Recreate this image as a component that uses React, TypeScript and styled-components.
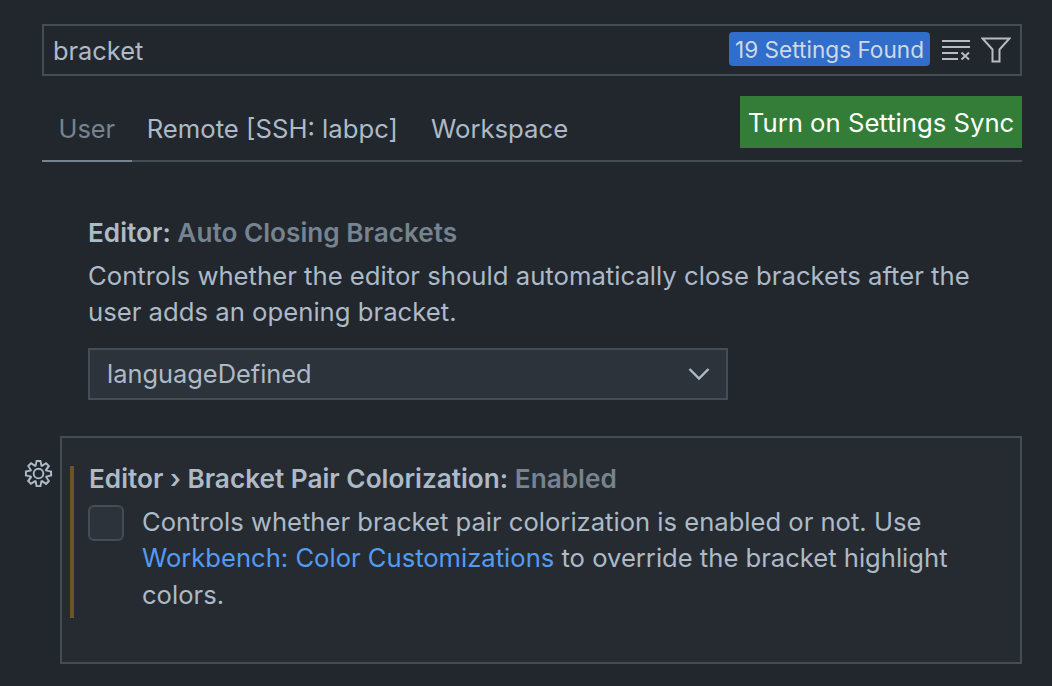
import React from "react";
import styled, { createGlobalStyle } from "styled-components";

const Global = createGlobalStyle`
  html, body { margin: 0; padding: 0; background: #22272e; }
  body { width: 1052px; height: 686px; overflow: hidden; font-family: Inter, "Liberation Sans", sans-serif; }
  * { box-sizing: border-box; }
`;

const Page = styled.div`
  width: 1052px;
  height: 686px;
  padding: 24px 30px 0 42px;
  display: flex;
  flex-direction: column;
  background: #22272e;
  color: #adbac7;
  font-size: 25.7px;
`;

const SearchBox = styled.div`
  height: 52px;
  border: 2px solid #444c56;
  display: flex;
  align-items: center;
  padding: 0 9px 0 9px;
`;
const SearchText = styled.span`
  flex: 1;
  color: #adbac7;
  font-size: 25.4px;
`;
const Badge = styled.span`
  height: 34px;
  width: 201px;
  margin-bottom: 2px;
  display: flex;
  align-items: center;
  justify-content: center;
  white-space: nowrap;
  border-radius: 4px;
  background: #316dca;
  color: #cdd9e5;
  font-size: 22.6px;
`;
const IconSlot = styled.span<{ $gap: number }>`
  display: flex;
  margin-left: ${(p) => p.$gap}px;
`;

const TabBar = styled.div`
  position: relative;
  height: 86px;
  display: flex;
  align-items: flex-end;
  border-bottom: 2px solid #444c56;
`;
const Tab = styled.div<{ $active?: boolean }>`
  height: 60px;
  margin-bottom: -2px;
  padding: 11px ${(p) => (p.$active ? "16.5px" : "18px")} 0 ${(p) => (p.$active ? "16.5px" : "15px")};
  color: ${(p) => (p.$active ? "#768390" : "#adbac7")};
  border-bottom: 2px solid ${(p) => (p.$active ? "#768390" : "transparent")};
  font-size: ${(p) => (p.$active ? "25.4px" : "25.7px")};
  white-space: nowrap;
`;
const SyncButton = styled.button`
  position: absolute;
  right: 0;
  top: 20px;
  width: 282px;
  height: 52px;
  border: 0;
  padding: 0;
  background: #347d39;
  color: #ffffff;
  font: 400 25.7px Inter, "Liberation Sans", sans-serif;
  line-height: 54px;
  white-space: nowrap;
`;

const Setting = styled.section`
  margin-left: 46px;
  margin-top: 54px;
`;
const Title = styled.div`
  font-weight: 600;
  font-size: 26.2px;
  line-height: 34px;
  color: #768390;
  white-space: nowrap;
`;
const TitleStrong = styled.span`
  color: #adbac7;
`;
const Description = styled.div`
  margin-top: 8px;
  line-height: 36px;
  color: #adbac7;
`;
const Select = styled.div`
  margin-top: 18px;
  width: 640px;
  height: 52px;
  display: flex;
  align-items: center;
  justify-content: space-between;
  padding: 0 16px 2px 17px;
  background: #2d333b;
  border: 2px solid #444c56;
  color: #adbac7;
  font-size: 25.4px;
`;
const Chevron = styled.svg`
  margin-top: 2px;
`;

const FocusedRow = styled.div`
  position: relative;
  margin: 36px 0 0 18px;
  height: 228px;
  border: 2px solid #444c56;
  background: #262b31;
  padding: 24px 20px 0 8px;
  display: flex;
`;
const GearSlot = styled.span`
  position: absolute;
  left: -39px;
  top: 20px;
  display: flex;
`;
const Accent = styled.div`
  width: 4px;
  height: 152px;
  margin-top: 4px;
  background: #6c5424;
  flex: none;
`;
const RowBody = styled.div`
  margin-left: 15px;
  flex: 1;
`;
const CheckRow = styled.div`
  display: flex;
  margin-top: 8px;
  margin-left: -1px;
`;
const Checkbox = styled.span`
  flex: none;
  width: 36px;
  height: 36px;
  margin-top: 1px;
  border: 2px solid #444c56;
  border-radius: 6px;
  background: #2d333b;
`;
const CheckText = styled.div`
  margin-left: 18px;
  font-size: 25.6px;
  line-height: 36.4px;
  color: #adbac7;
`;
const LinkText = styled.span`
  color: #539bf5;
`;

export default function App() {
  return (
    <Page>
      <Global />
      <SearchBox>
        <SearchText>bracket</SearchText>
        <Badge>19 Settings Found</Badge>
        <IconSlot $gap={11}>
          <svg width="30" height="24" viewBox="0 0 30 24" fill="none" stroke="#b5bcc3" strokeWidth="2">
            <path d="M1 3H29M1 9H29M1 15H17M1 21H17" />
            <path d="M20.5 14.5L28 21.5M28 14.5L20.5 21.5" />
          </svg>
        </IconSlot>
        <IconSlot $gap={10}>
          <svg width="30" height="26" viewBox="0 0 30 26" fill="none" stroke="#b5bcc3" strokeWidth="2">
            <path d="M1.5 1.5H28.5L18.5 12.5V24.5H11.5V12.5Z" />
          </svg>
        </IconSlot>
      </SearchBox>
      <TabBar>
        <Tab $active>User</Tab>
        <Tab>Remote [SSH: labpc]</Tab>
        <Tab>Workspace</Tab>
        <SyncButton>Turn on Settings Sync</SyncButton>
      </TabBar>
      <Setting>
        <Title>
          <TitleStrong>Editor: </TitleStrong>Auto Closing Brackets
        </Title>
        <Description>
          Controls whether the editor should automatically close brackets after the user adds an opening bracket.
        </Description>
        <Select>
          languageDefined
          <Chevron width="22" height="14" viewBox="0 0 22 14" fill="none" stroke="#adbac7" strokeWidth="2.4">
            <path d="M1.5 2L11 11.5L20.5 2" />
          </Chevron>
        </Select>
      </Setting>
      <FocusedRow>
        <GearSlot>
          <svg width="31" height="31" viewBox="0 0 16 16" fill="#adbac7">
            <path
              fillRule="evenodd"
              d="M9.1 4.4L8.6 2H7.4l-.5 2.4-.7.3-2-1.3-.9.8 1.3 2-.2.7-2.4.5v1.2l2.4.5.3.8-1.3 2 .8.8 2-1.3.8.3.4 2.3h1.2l.5-2.4.8-.3 2 1.3.8-.8-1.3-2 .3-.7 2.3-.5V7.4l-2.4-.5-.3-.8 1.3-2-.8-.8-2 1.3-.7-.2zM9.4 1l.5 2.4L12 2.1l2 2-1.4 2.1 2.4.4v2.8l-2.4.5L14 12l-2 2-2.1-1.4-.5 2.4H6.6l-.5-2.4L4 13.9l-2-2 1.4-2.1L1 9.4V6.6l2.4-.5L2.1 4l2-2 2.1 1.4.4-2.4h2.8zM8 10a2 2 0 1 0 0-4 2 2 0 0 0 0 4zm0 1a3 3 0 1 1 0-6 3 3 0 0 1 0 6z"
            />
          </svg>
        </GearSlot>
        <Accent />
        <RowBody>
          <Title>
            <TitleStrong>Editor › Bracket Pair Colorization: </TitleStrong>Enabled
          </Title>
          <CheckRow>
            <Checkbox />
            <CheckText>
              Controls whether bracket pair colorization is enabled or not. Use <LinkText>Workbench: Color Customizations</LinkText> to override the bracket highlight colors.
            </CheckText>
          </CheckRow>
        </RowBody>
      </FocusedRow>
    </Page>
  );
}
